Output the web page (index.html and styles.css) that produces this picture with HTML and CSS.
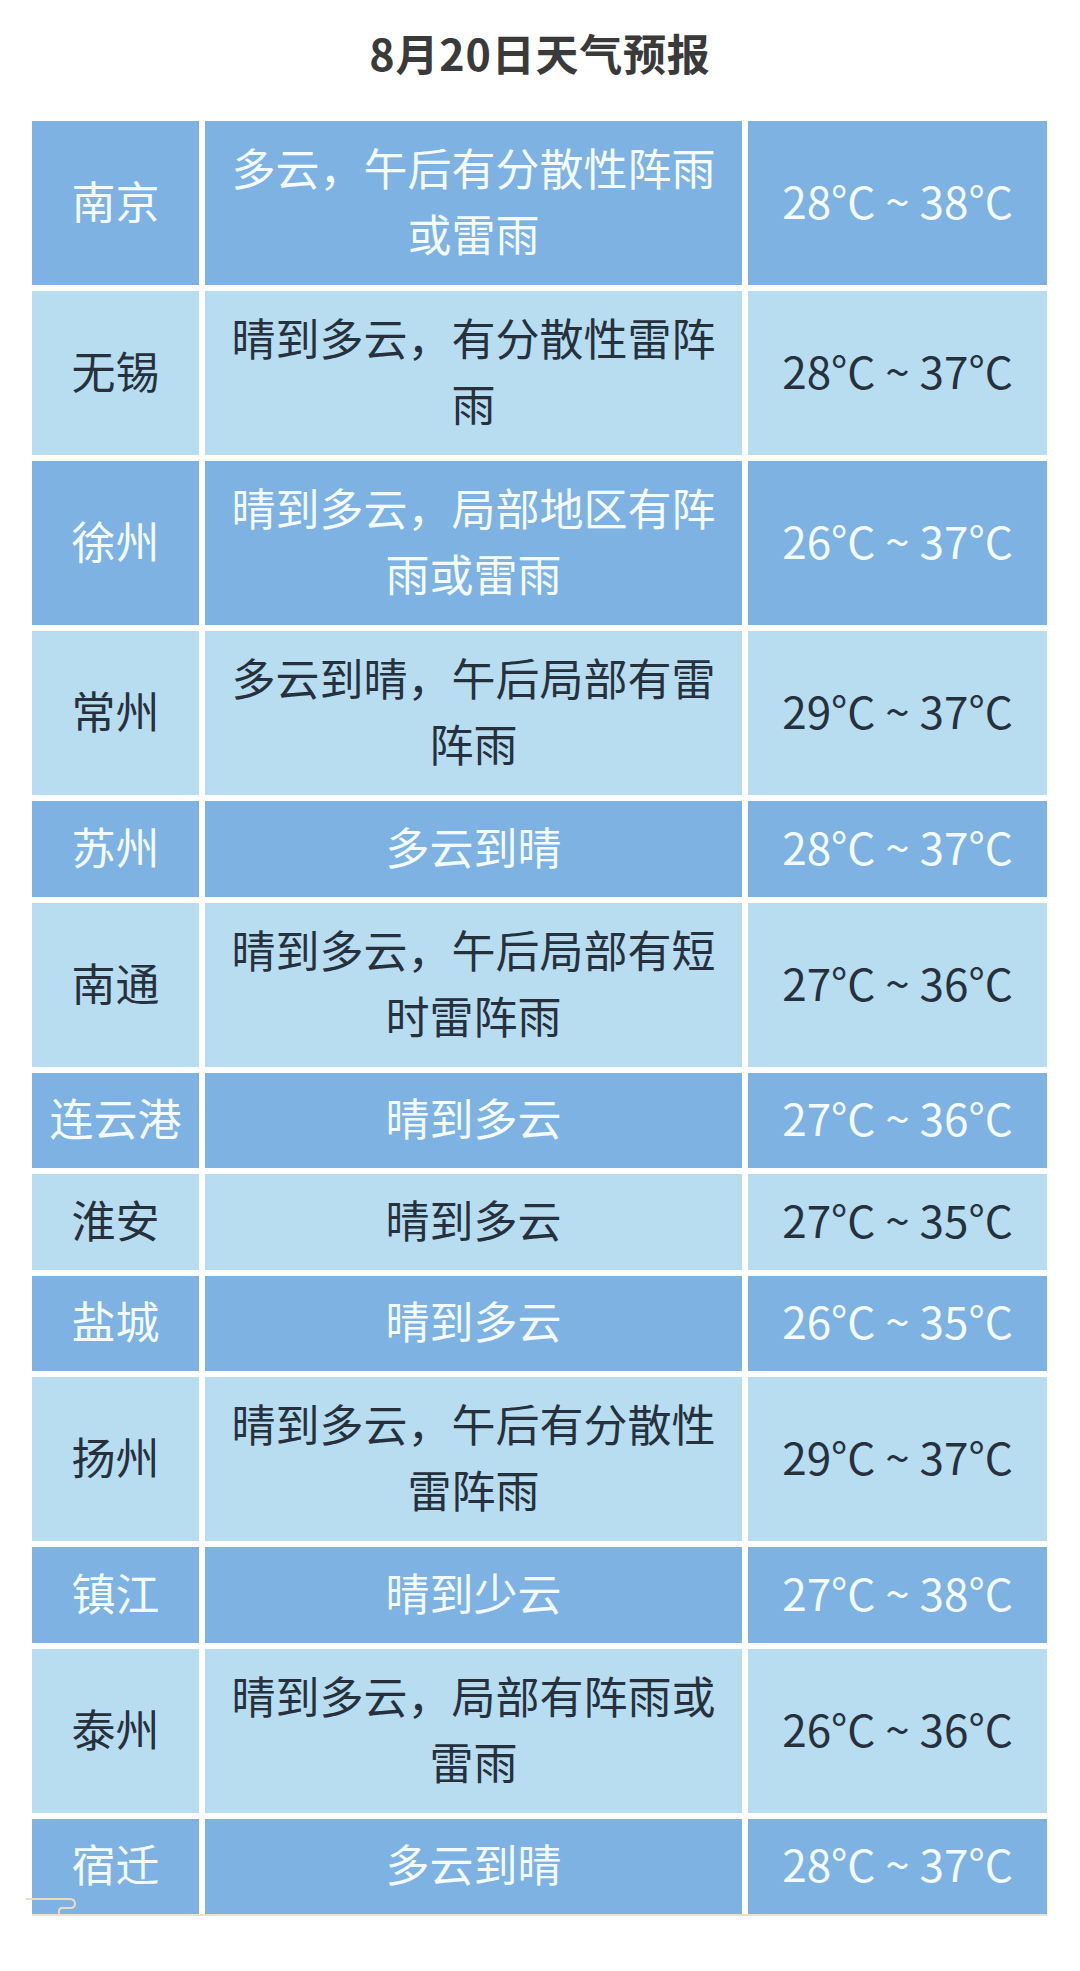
FILE: index.html
```html
<!DOCTYPE html>
<html lang="zh-CN">
<head>
<meta charset="utf-8">
<title>8月20日天气预报</title>
<link rel="stylesheet" href="styles.css">
</head>
<body>
<h1 class="title">8月20日天气预报</h1>
<div class="table">
  <div class="row dark tall"><div class="cell">南京</div><div class="cell desc">多云，午后有分散性阵雨或雷雨</div><div class="cell">28°C ~ 38°C</div></div>
  <div class="row light tall"><div class="cell">无锡</div><div class="cell desc">晴到多云，有分散性雷阵雨</div><div class="cell">28°C ~ 37°C</div></div>
  <div class="row dark tall"><div class="cell">徐州</div><div class="cell desc">晴到多云，局部地区有阵雨或雷雨</div><div class="cell">26°C ~ 37°C</div></div>
  <div class="row light tall"><div class="cell">常州</div><div class="cell desc">多云到晴，午后局部有雷阵雨</div><div class="cell">29°C ~ 37°C</div></div>
  <div class="row dark short"><div class="cell">苏州</div><div class="cell desc">多云到晴</div><div class="cell">28°C ~ 37°C</div></div>
  <div class="row light tall"><div class="cell">南通</div><div class="cell desc">晴到多云，午后局部有短时雷阵雨</div><div class="cell">27°C ~ 36°C</div></div>
  <div class="row dark short"><div class="cell">连云港</div><div class="cell desc">晴到多云</div><div class="cell">27°C ~ 36°C</div></div>
  <div class="row light short"><div class="cell">淮安</div><div class="cell desc">晴到多云</div><div class="cell">27°C ~ 35°C</div></div>
  <div class="row dark short"><div class="cell">盐城</div><div class="cell desc">晴到多云</div><div class="cell">26°C ~ 35°C</div></div>
  <div class="row light tall"><div class="cell">扬州</div><div class="cell desc">晴到多云，午后有分散性雷阵雨</div><div class="cell">29°C ~ 37°C</div></div>
  <div class="row dark short"><div class="cell">镇江</div><div class="cell desc">晴到少云</div><div class="cell">27°C ~ 38°C</div></div>
  <div class="row light tall"><div class="cell">泰州</div><div class="cell desc">晴到多云，局部有阵雨或雷雨</div><div class="cell">26°C ~ 36°C</div></div>
  <div class="row dark short"><div class="cell">宿迁</div><div class="cell desc">多云到晴</div><div class="cell">28°C ~ 37°C</div></div>
  <svg class="deco" width="60" height="24" viewBox="0 0 60 24" aria-hidden="true">
    <path d="M0 7 H44 Q49 7 49 12 Q49 16 44 16 H36 Q33 16 33 19 V23" fill="none" stroke="#e9dcc0" stroke-width="2"/>
  </svg>
</div>
</body>
</html>
```

FILE: styles.css
```css
html, body {
  margin: 0;
  padding: 0;
  background: #ffffff;
}

body {
  width: 1080px;
  font-family: "Noto Sans CJK SC", "Noto Sans", sans-serif;
}

.title {
  margin: 0;
  height: 108px;
  line-height: 104px;
  text-align: center;
  font-size: 43px;
  font-weight: 700;
  color: #3a3a3a;
  letter-spacing: 0.8px;
}

.table {
  position: relative;
  margin: 13px 0 0 32px;
  width: 1015px;
  display: flex;
  flex-direction: column;
  gap: 6px;
  border-bottom: 2px solid #ece2c8;
}

.row {
  display: grid;
  grid-template-columns: 167px 537px 299px;
  column-gap: 6px;
}

.row.tall { height: 164px; }
.row.short { height: 95.5px; }

.cell {
  display: flex;
  align-items: center;
  justify-content: center;
  text-align: center;
  font-size: 44px;
  line-height: 66px;
  white-space: nowrap;
  padding-bottom: 6px;
  box-sizing: border-box;
}

.cell.desc {
  white-space: normal;
  padding-left: 20px;
  padding-right: 20px;
}

.dark .cell {
  background: #7db2e3;
  color: #f4fbff;
}

.light .cell {
  background: #b8ddf1;
  color: #26313d;
}

.deco {
  position: absolute;
  left: -6px;
  bottom: -2px;
}
```
